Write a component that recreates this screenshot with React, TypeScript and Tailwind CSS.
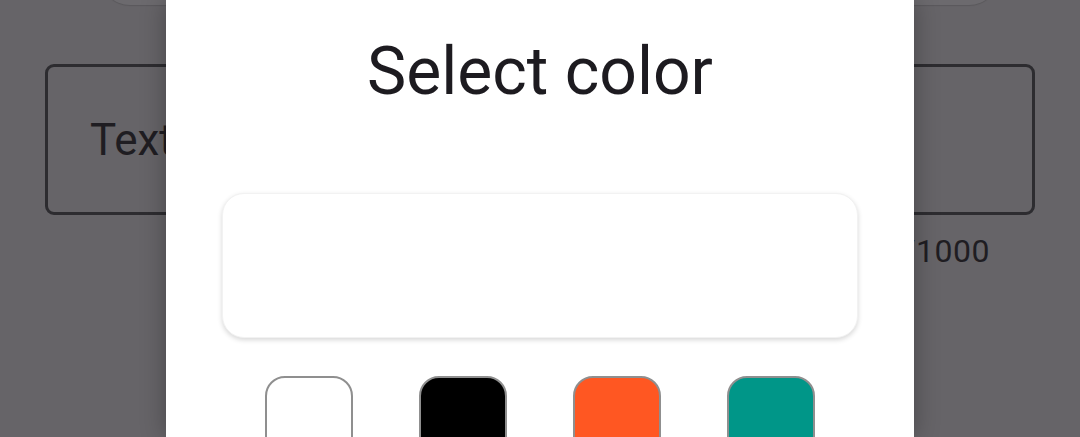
const SWATCHES = ["bg-white", "bg-black", "bg-[#ff5722]", "bg-[#009688]"];

export default function App() {
  return (
    <div className="relative w-[1080px] h-[437px] overflow-hidden bg-[#666468] font-['Roboto',sans-serif]">
      {/* page behind the scrim */}
      <div className="px-[45px]">
        <div className="ml-[55px] mr-[36px] -mt-[55px] h-[60px] rounded-[60px] bg-[#6c6a6e] shadow-[0_1px_1px_rgba(0,0,0,0.12)]" />
        <div className="mt-[59px] h-[151px] rounded-[9px] border-[3px] border-[#2d2c30] flex items-center pl-[42px]">
          <span className="text-[44px] leading-none text-[#1f1d22]">Text</span>
        </div>
        <div className="flex justify-end pr-[45px] mt-[16px]">
          <span className="text-[32px] leading-[40px] text-[#1f1d22] tracking-[0.5px]">0/1000</span>
        </div>
      </div>

      {/* dialog */}
      <div className="absolute left-[166px] top-0 bottom-0 w-[748px] bg-white shadow-[0_0_24px_rgba(0,0,0,0.3)] flex flex-col items-center px-[56px]">
        <h1 className="mt-[39px] text-[66px] leading-[66px] text-[#1d1b20] font-normal">Select color</h1>
        <div className="mt-[88px] w-full h-[145px] shrink-0 rounded-[22px] bg-white border border-[#f2f2f2] shadow-[0_2px_5px_rgba(0,0,0,0.16)]" />
        <div className="mt-[38px] w-full flex justify-center gap-[66px]">
          {SWATCHES.map((c) => (
            <div key={c} className={`w-[88px] h-[88px] shrink-0 rounded-[20px] border-2 border-[#8f8f8f] ${c}`} />
          ))}
        </div>
      </div>
    </div>
  );
}
